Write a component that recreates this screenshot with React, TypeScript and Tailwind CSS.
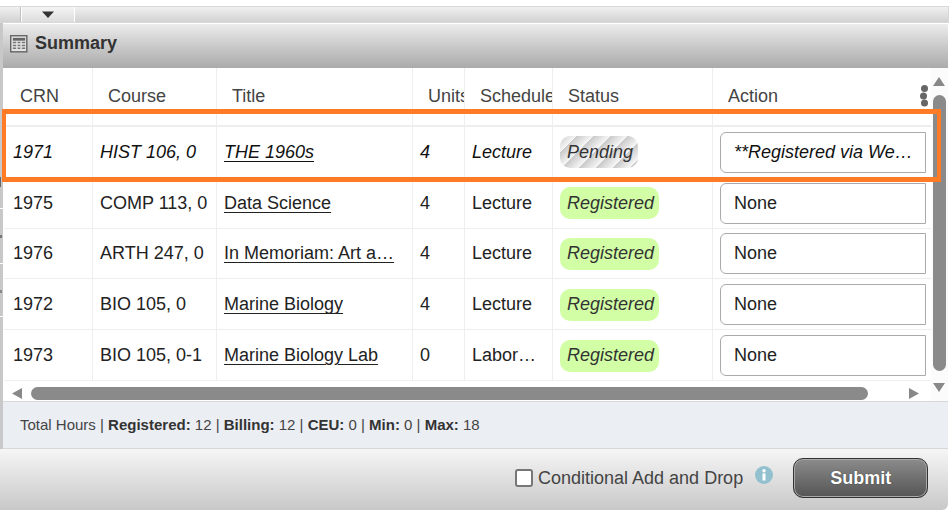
const font = "[font-family:'Liberation_Sans',Arial,sans-serif]";
const grid = "grid grid-cols-[89px_124px_196px_52px_88px_160px_214px]";
const cell = "border-r border-[#eeeeee] flex items-center overflow-hidden whitespace-nowrap";

type Row = { crn: string; course: string; title: string; units: string; sched: string; action: string; pending?: boolean };
const rows: Row[] = [
  { crn: "1971", course: "HIST 106, 0", title: "THE 1960s", units: "4", sched: "Lecture", action: "**Registered via We…", pending: true },
  { crn: "1975", course: "COMP 113, 0", title: "Data Science", units: "4", sched: "Lecture", action: "None" },
  { crn: "1976", course: "ARTH 247, 0", title: "In Memoriam: Art a…", units: "4", sched: "Lecture", action: "None" },
  { crn: "1972", course: "BIO 105, 0", title: "Marine Biology", units: "4", sched: "Lecture", action: "None" },
  { crn: "1973", course: "BIO 105, 0-1", title: "Marine Biology Lab", units: "0", sched: "Labor…", action: "None" },
];
const headers = ["CRN", "Course", "Title", "Units", "Schedule", "Status", "Action"];

function DataRow({ r }: { r: Row }) {
  return (
    <div className={`${grid} h-[51px] border-b border-[#eeeeee] text-[18px] ${r.pending ? "italic text-[#111]" : "text-[#222]"}`}>
      <div className={`${cell} pl-[9px] pt-px`}>{r.crn}</div>
      <div className={`${cell} pl-[7px] pt-px`}>{r.course}</div>
      <div className={`${cell} pl-[7px] pt-px`}><span className="underline underline-offset-[3px]">{r.title}</span></div>
      <div className={`${cell} pl-[7px] pt-px`}>{r.units}</div>
      <div className={`${cell} pl-[7px] pt-px`}>{r.sched}</div>
      <div className={`${cell} pl-[7px] pt-px`}>
        {r.pending ? (
          <span className="h-[32px] pl-[7px] pr-[5px] flex items-center rounded-[10px] italic text-[#333] bg-[repeating-linear-gradient(135deg,#cacaca_0px,#f8f8f8_12px)]">Pending</span>
        ) : (
          <span className="h-[32px] pl-[7px] pr-[5px] flex items-center rounded-[10px] italic text-[#333] bg-[#d2ffa6]">Registered</span>
        )}
      </div>
      <div className="flex items-center pl-[7px] pt-px">
        <div className="h-[41px] w-[206px] border border-[#aaa] rounded-l-[6px] bg-white pl-[13px] flex items-center">{r.action}</div>
      </div>
    </div>
  );
}

export default function App() {
  return (
    <div className={`${font} relative w-[952px] h-[510px] bg-white overflow-hidden flex flex-col`}>
      {/* top tab strip */}
      <div className="mt-[6px] w-[949px] h-[17px] border-y border-r border-[#d8d8d8] bg-gradient-to-b from-[#f0f0f0] to-[#d2d2d2] flex">
        <div className="w-[21px] border-r border-[#c0c0c0]" />
        <div className="w-[54px] border-x border-white bg-gradient-to-b from-[#f4f4f4] to-[#dcdcdc] flex items-center justify-center">
          <svg width="12" height="7" viewBox="0 0 12 7"><path d="M0 0.5h12L6 7z" fill="#333" /></svg>
        </div>
      </div>

      {/* panel */}
      <div className="w-[948px] flex-1 flex flex-col min-h-0 border-l-[3px] border-[#c8c8c8]">
        <div className="mt-px h-[44px] shrink-0 bg-gradient-to-b from-[#ececec] to-[#aaaaaa] flex items-center pl-[7px] pb-[4px] gap-[7px]">
          <svg width="18" height="18" viewBox="0 0 19 19" fill="none">
            <rect x="0.75" y="0.75" width="17" height="17" fill="#e4e4e4" stroke="#666" strokeWidth="1.5" />
            <rect x="3" y="3" width="13" height="3" fill="#666" />
            <path d="M3 8h3.5M8 8h3M12.5 8H16M3 11h3.5M8 11h3M12.5 11H16M3 14h3.5M8 14h3M12.5 14H16" stroke="#777" strokeWidth="1.5" />
          </svg>
          <span className="text-[18px] font-bold text-[#333] relative top-[-1px]">Summary</span>
        </div>

        <div className="flex h-[333px] shrink-0 bg-white">
          <div className="w-[927px] shrink-0 ml-px flex flex-col">
            <div className={`${grid} h-[59px] border-b-2 border-[#eeeeee] text-[18px] text-[#444]`}>
              {headers.map((h, i) => (
                <div key={h} className={`${i < 6 ? "border-r border-[#eeeeee]" : ""} overflow-hidden whitespace-nowrap ${i === 0 ? "pl-[16px]" : "pl-[15px]"} pt-[15px]`}>{h}</div>
              ))}
            </div>
            {rows.map((r) => <DataRow key={r.crn} r={r} />)}
            <div className="h-[20px] flex items-center pl-[8px] pt-[4px]">
              <svg width="10" height="11" viewBox="0 0 10 11"><path d="M10 0v11L0 5.5z" fill="#888" /></svg>
              <div className="ml-[9px] w-[837px] h-[13px] rounded-full bg-[#8a8a8a]" />
              <svg className="ml-[41px]" width="10" height="11" viewBox="0 0 10 11"><path d="M0 0v11l10-5.5z" fill="#888" /></svg>
            </div>
          </div>
          <div className="flex-1 flex flex-col items-center bg-[#fbfbfb] pr-[2px] pl-px pt-[9px]">
            <svg width="12" height="9" viewBox="0 0 12 9"><path d="M6 0l6 9H0z" fill="#888" /></svg>
            <div className="mt-[9px] w-[13px] h-[276px] rounded-full bg-[#8a8a8a]" />
            <svg className="mt-[12px]" width="12" height="9" viewBox="0 0 12 9"><path d="M0 0h12L6 9z" fill="#888" /></svg>
          </div>
        </div>

        <div className="h-[48px] shrink-0 border-y border-[#d8d8d8] bg-[#ebeef3] pl-[17px] flex items-center text-[15px] text-[#444] whitespace-pre">
          <span>Total Hours | </span><b className="text-[#333]">Registered: </b><span>12 | </span><b className="text-[#333]">Billing: </b><span>12 | </span><b className="text-[#333]">CEU: </b><span>0 | </span><b className="text-[#333]">Min: </b><span>0 | </span><b className="text-[#333]">Max: </b><span>18</span>
        </div>
      </div>

      {/* bottom action bar */}
      <div className="w-[948px] h-[61px] shrink-0 rounded-br-[6px] bg-gradient-to-b from-[#f6f6f6] to-[#c8c8c8] flex items-center pl-[515px] pb-[3px]">
        <div className="w-[18px] h-[18px] border-2 border-[#777] rounded-[3px] bg-white" />
        <span className="ml-[5px] text-[18px] text-[#444]">Conditional Add and Drop</span>
        <svg className="ml-[12px] relative top-[-3px]" width="18" height="18" viewBox="0 0 18 18">
          <circle cx="9" cy="9" r="9" fill="#93c0cf" />
          <rect x="7.5" y="7.5" width="3" height="7" fill="#fff" />
          <circle cx="9" cy="4.8" r="1.7" fill="#fff" />
        </svg>
        <button className="ml-[20px] w-[135px] h-[40px] rounded-[10px] border border-[#333] shadow-[inset_0_0_0_1px_#aaa] bg-gradient-to-b from-[#8c8c8c] to-[#555] text-white font-bold text-[18px] [text-shadow:0_0_1px_#222]">Submit</button>
      </div>

      {/* page behind the panel, showing at its left edge */}
      <div className="absolute left-0 top-[177px] w-px h-[10px] bg-[#666]" />
      <div className="absolute left-0 top-[208px] w-[3px] h-px bg-white" />
      <div className="absolute left-0 top-[235px] w-[2px] h-[3px] bg-[#777]" />
      <div className="absolute left-0 top-[263px] w-[3px] h-px bg-white" />
      <div className="absolute left-0 top-[290px] w-[2px] h-[3px] bg-[#888]" />
      <div className="absolute left-0 top-[316px] w-[3px] h-px bg-white" />

      {/* column menu handle */}
      <svg className="absolute left-[920px] top-[85px]" width="8" height="22" viewBox="0 0 8 22">
        <circle cx="4.5" cy="3.5" r="3.5" fill="#666" /><circle cx="3.5" cy="11" r="3.5" fill="#666" /><circle cx="4.5" cy="18" r="3.5" fill="#666" />
      </svg>
      {/* orange highlight */}
      <div className="absolute left-[2px] top-[109px] w-[939px] h-[73px] border-x-[4px] border-y-[5px] border-[#ff7b26]" />
    </div>
  );
}
